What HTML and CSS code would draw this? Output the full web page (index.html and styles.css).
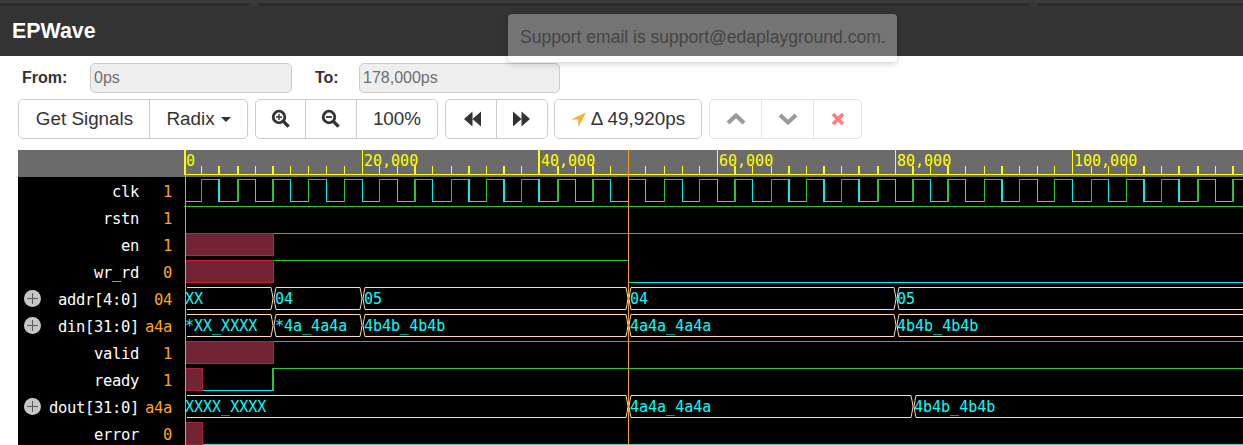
FILE: index.html
```html
<!DOCTYPE html>
<html lang="en">
<head>
    <meta charset="UTF-8">
    <meta name="viewport" content="width=device-width, initial-scale=1.0">
    <title>EPWave</title>
    <link rel="stylesheet" href="styles.css">
</head>
<body>
    <div class="top-strip">
        <span class="strip-part strip-a"></span>
        <span class="strip-seam"></span>
        <span class="strip-part strip-b"></span>
        <span class="strip-seam"></span>
        <span class="strip-part strip-c"></span>
    </div>
    <header class="navbar">EPWave</header>
    <div class="toast">Support email is support@edaplayground.com.</div>

    <form class="range-row">
        <label class="from-label" for="fromTime">From:</label>
        <input class="range-input" type="text" id="fromTime" value="0ps" disabled>
        <label class="to-label" for="toTime">To:</label>
        <input class="range-input to-input" type="text" id="toTime" value="178,000ps" disabled>
    </form>

    <div class="toolbar">
        <div class="btn-group">
            <button class="btn btn-signals">Get Signals</button>
            <button class="btn btn-radix">Radix <span class="caret"></span></button>
        </div>
        <div class="btn-group">
            <button class="btn btn-zoom-in" aria-label="Zoom in">
                <svg class="icon" width="20" height="20" viewBox="0 0 20 20">
                    <circle cx="8" cy="8" r="5.8" fill="none" stroke="#333" stroke-width="2.8"/>
                    <path d="M12.4 12.4 L17.6 17.6" stroke="#333" stroke-width="3.4" fill="none"/>
                    <path d="M8 5 V11 M5 8 H11" stroke="#333" stroke-width="1.4" fill="none"/>
                </svg>
            </button>
            <button class="btn btn-zoom-out" aria-label="Zoom out">
                <svg class="icon" width="20" height="20" viewBox="0 0 20 20">
                    <circle cx="8" cy="8" r="5.8" fill="none" stroke="#333" stroke-width="2.8"/>
                    <path d="M12.4 12.4 L17.6 17.6" stroke="#333" stroke-width="3.4" fill="none"/>
                    <path d="M5 8 H11" stroke="#333" stroke-width="1.8" fill="none"/>
                </svg>
            </button>
            <button class="btn btn-percent">100%</button>
        </div>
        <div class="btn-group">
            <button class="btn btn-back" aria-label="Previous edge">
                <svg class="icon" width="18" height="16" viewBox="0 0 18 16">
                    <path d="M0 8 L8.5 0.5 V15.5 Z M8.5 8 L17 0.5 V15.5 Z" fill="#333"/>
                </svg>
            </button>
            <button class="btn btn-forward" aria-label="Next edge">
                <svg class="icon" width="18" height="16" viewBox="0 0 18 16">
                    <path d="M0 0.5 L8.5 8 L0 15.5 Z M8.5 0.5 L17 8 L8.5 15.5 Z" fill="#333"/>
                </svg>
            </button>
        </div>
        <div class="btn-group btn-group-delta">
            <button class="btn btn-delta">
                <svg class="icon" width="15" height="15" viewBox="0 0 15 15">
                    <path d="M15 0.4 L7.6 15 L7.2 7.6 L0 7.6 Z" fill="#fdae33"/>
                </svg>
                Δ 49,920ps
            </button>
        </div>
        <div class="btn-group btn-group-off">
            <button class="btn btn-up" aria-label="Move up">
                <svg class="icon" width="20" height="12" viewBox="0 0 20 12">
                    <path d="M2 10 L10 2.5 L18 10" fill="none" stroke="#9a9a9a" stroke-width="4"/>
                </svg>
            </button>
            <button class="btn btn-down" aria-label="Move down">
                <svg class="icon" width="20" height="12" viewBox="0 0 20 12">
                    <path d="M2 2 L10 9.5 L18 2" fill="none" stroke="#9a9a9a" stroke-width="4"/>
                </svg>
            </button>
            <button class="btn btn-remove" aria-label="Remove">
                <svg class="icon" width="14" height="14" viewBox="0 0 14 14">
                    <path d="M2 2 L12 12 M12 2 L2 12" fill="none" stroke="#ff8080" stroke-width="3.8"/>
                </svg>
            </button>
        </div>
    </div>

    <div class="viewer">
        <div class="signals">
            <div class="signals-head"></div>
            <div class="signal"><span class="sig-name">clk</span><span class="sig-value">1</span></div>
            <div class="signal"><span class="sig-name">rstn</span><span class="sig-value">1</span></div>
            <div class="signal"><span class="sig-name">en</span><span class="sig-value">1</span></div>
            <div class="signal"><span class="sig-name">wr_rd</span><span class="sig-value">0</span></div>
            <div class="signal"><span class="expand"></span><span class="sig-name">addr[4:0]</span><span class="sig-value">04</span></div>
            <div class="signal"><span class="expand"></span><span class="sig-name">din[31:0]</span><span class="sig-value">a4a</span></div>
            <div class="signal"><span class="sig-name">valid</span><span class="sig-value">1</span></div>
            <div class="signal"><span class="sig-name">ready</span><span class="sig-value">1</span></div>
            <div class="signal"><span class="expand"></span><span class="sig-name">dout[31:0]</span><span class="sig-value">a4a</span></div>
            <div class="signal"><span class="sig-name">error</span><span class="sig-value">0</span></div>
        </div>

        <svg class="wave" width="1059" height="295" viewBox="184 150 1059 295">
            <g id="shapes"></g>
            <g class="axis-text">
                <text x="186" y="166">0</text>
                <text x="364" y="166">20,000</text>
                <text x="541" y="166">40,000</text>
                <text x="719" y="166">60,000</text>
                <text x="897" y="166">80,000</text>
                <text x="1074" y="166">100,000</text>
            </g>
            <g class="bus-text">
                <text x="185" y="304">XX</text>
                <text x="275" y="304">04</text>
                <text x="364" y="304">05</text>
                <text x="630" y="304">04</text>
                <text x="897" y="304">05</text>
                <text x="185" y="331">*XX_XXXX</text>
                <text x="275" y="331">*4a_4a4a</text>
                <text x="364" y="331">4b4b_4b4b</text>
                <text x="630" y="331">4a4a_4a4a</text>
                <text x="897" y="331">4b4b_4b4b</text>
                <text x="185" y="412">XXXX_XXXX</text>
                <text x="630" y="412">4a4a_4a4a</text>
                <text x="914" y="412">4b4b_4b4b</text>
            </g>
        </svg>
    </div>

    <script src="wave.js"></script>
</body>
</html>
```

FILE: styles.css
```css
html, body {
    height: 445px;
    overflow: hidden;
}

body {
    font-family: "Liberation Sans", Arial, sans-serif;
    margin: 0;
    padding: 0;
    background-color: #fff;
    color: #333;
}

.top-strip {
    display: flex;
    height: 7px;
    background-color: #333;
}

.strip-part {
    height: 7px;
    background: linear-gradient(#3a3a3a 0, #3a3a3a 2px, #3f3f3f 2px, #3f3f3f 3px, #2b2b2b 3px, #2b2b2b 6px, #333 6px);
}

.strip-a {
    width: 249px;
}

.strip-b {
    width: 771px;
}

.strip-c {
    flex: 1;
}

.strip-seam {
    width: 9px;
    background: linear-gradient(#3a3a3a 0, #3a3a3a 3px, #363636 3px, #363636 7px);
}

.navbar {
    height: 49px;
    padding-left: 12px;
    background-color: #333;
    color: #fff;
    font-size: 21.4px;
    font-weight: bold;
    line-height: 49px;
}

.toast {
    position: absolute;
    left: 508px;
    top: 14px;
    width: 389px;
    height: 48px;
    box-sizing: border-box;
    padding-left: 12px;
    background-color: rgba(255, 255, 255, 0.32);
    border-radius: 4px;
    box-shadow: 0 2px 6px rgba(0, 0, 0, 0.18);
    color: #454545;
    font-size: 17.55px;
    line-height: 47px;
    white-space: nowrap;
}

.range-row {
    display: flex;
    align-items: center;
    height: 30px;
    margin-top: 7px;
    padding-left: 22px;
    font-size: 16px;
}

.range-row label {
    font-weight: bold;
}

.from-label {
    width: 68px;
}

.to-label {
    width: 44px;
    margin-left: 23px;
}

.range-input {
    width: 202px;
    height: 30px;
    box-sizing: border-box;
    padding: 0 3px;
    border: 1px solid #ccc;
    border-radius: 5px;
    background-color: #eee;
    color: #6f6f6f;
    font-family: inherit;
    font-size: 16px;
}

.to-input {
    width: 201px;
}

.toolbar {
    display: flex;
    gap: 7px;
    margin-top: 6px;
    padding-left: 18px;
}

.btn-group {
    display: flex;
    height: 40px;
    box-sizing: border-box;
    border: 1px solid #ccc;
    border-radius: 5px;
    background-color: #fff;
}

.btn-group-delta {
    margin-left: -1px;
}

.btn-group-off {
    border-color: #e4e4e4;
}

.btn {
    display: flex;
    align-items: center;
    justify-content: center;
    padding: 0;
    border: none;
    border-left: 1px solid #ccc;
    background: none;
    color: #333;
    font-family: inherit;
    font-size: 18.85px;
    cursor: pointer;
}

.btn:first-child {
    border-left: none;
}

.btn-group-off .btn {
    border-left-color: #e4e4e4;
}

.btn-group-off .btn:first-child {
    border-left: none;
}

.btn-signals { width: 130px; padding-left: 1px; }
.btn-radix { width: 98px; }
.btn-zoom-in { width: 49px; }
.btn-zoom-out { width: 51px; }
.btn-percent { width: 81px; }
.btn-back { width: 50px; padding-left: 3px; }
.btn-forward { width: 51px; }
.btn-delta { width: 146px; gap: 5px; }
.btn-up { width: 51px; }
.btn-down { width: 52px; }
.btn-remove { width: 48px; }

.caret {
    display: inline-block;
    width: 0;
    height: 0;
    margin-left: 6px;
    border-top: 5px solid #333;
    border-left: 5.5px solid transparent;
    border-right: 5.5px solid transparent;
}

.viewer {
    display: flex;
    margin-top: 11px;
    margin-left: 18px;
    background-color: #000;
}

.signals {
    width: 166px;
    flex: none;
    color: #fff;
    font-family: "DejaVu Sans Mono", monospace;
    font-size: 15.5px;
    letter-spacing: -0.33px;
}

.signals-head {
    height: 27px;
    background-color: #6b6b6b;
}

.signal {
    display: flex;
    align-items: center;
    height: 27px;
    line-height: 27px;
}

.sig-name {
    width: 121px;
    margin-left: auto;
    padding-top: 4px;
    text-align: right;
    white-space: nowrap;
}

.sig-value {
    width: 33px;
    margin-right: 12px;
    padding-top: 4px;
    color: #ffa31a;
    text-align: right;
}

.expand {
    position: relative;
    width: 17px;
    height: 17px;
    margin-left: 6px;
    margin-right: -23px;
    flex: none;
    border-radius: 50%;
    background: radial-gradient(#c2c2c2, #c8c8c8 60%, #dcdcdc);
}

.expand::before,
.expand::after {
    content: "";
    position: absolute;
    background-color: #5c5c5c;
}

.expand::before {
    left: 3px;
    right: 3px;
    top: 8px;
    height: 1px;
}

.expand::after {
    top: 3px;
    bottom: 3px;
    left: 8px;
    width: 1px;
}

.wave {
    display: block;
    flex: none;
}

.wave text {
    font-family: "DejaVu Sans Mono", monospace;
    font-size: 15px;
}

.axis-text {
    fill: #ffff00;
}

.bus-text {
    fill: #00ffff;
}
```

FILE: wave.js
```js
// draws the timeline, clock and bus shapes into the svg
const shapes = document.getElementById('shapes');
const NS = 'http://www.w3.org/2000/svg';

const GREEN = '#2ec42e';
const CYAN = '#00f0f0';
const YELLOW = '#ffff00';
const PEACH = '#ffdab9';

function rect(x, y, w, h, fill) {
    const r = document.createElementNS(NS, 'rect');
    r.setAttribute('x', x);
    r.setAttribute('y', y);
    r.setAttribute('width', w);
    r.setAttribute('height', h);
    r.setAttribute('fill', fill);
    r.setAttribute('shape-rendering', 'crispEdges');
    shapes.appendChild(r);
}

function line(d) {
    const p = document.createElementNS(NS, 'path');
    p.setAttribute('d', d);
    p.setAttribute('fill', 'none');
    p.setAttribute('stroke', PEACH);
    shapes.appendChild(p);
}

// pixel x of each clock edge, [x, 2] where the edge lands on two pixels
const edges = [
    [201], [218, 2], [237, 2], [255], [272, 2], [290], [308], [326], [344], [362],
    [379], [397], [414, 2], [432], [451], [468, 2], [486], [503, 2], [521], [538, 2],
    [557, 2], [575], [592, 2], [610], [628], [645], [664], [682], [699], [717],
    [734, 2], [752], [771], [788, 2], [806], [823, 2], [841], [858, 2], [877, 2], [895],
    [912, 2], [930], [947, 2], [965], [984], [1001, 2], [1019], [1037], [1054], [1072],
    [1091], [1108], [1126], [1143, 2], [1161], [1178, 2], [1197, 2], [1215], [1232, 2]
];
const majors = [362, 538, 717, 895, 1072];

// header
rect(184, 150, 1059, 27, '#6b6b6b');
rect(184, 174, 1059, 1, YELLOW);
rect(184, 150, 2, 25, YELLOW);
edges.forEach(([x, w = 1]) => {
    const top = majors.includes(x) ? 150 : 166;
    rect(x, top, w, 174 - top, YELLOW);
});

// clk
rect(185, 201, 16, 1, CYAN);
edges.forEach(([x, w = 1], i) => {
    const rising = i % 2 === 0;
    const next = edges[i + 1] ? edges[i + 1][0] : 1243;
    rect(x, 179, w, 23, rising ? GREEN : CYAN);
    rect(x, rising ? 179 : 201, next - x, 1, rising ? GREEN : CYAN);
});

// single bit levels: [x, y, width]
rect(184, 206, 1059, 1, GREEN);
rect(273, 233, 970, 1, GREEN);
rect(273, 260, 355, 1, GREEN);
rect(628, 282, 615, 1, CYAN);
rect(273, 341, 970, 1, GREEN);
rect(272, 368, 2, 23, GREEN);
rect(273, 368, 970, 1, GREEN);
rect(203, 390, 70, 1, CYAN);
rect(202, 444, 1041, 1, CYAN);

// undefined stretches
function unknown(y, right, border) {
    rect(185, y, right - 185, 23, border);
    rect(186, y + 1, right - 187, 21, '#722334');
}
unknown(233, 274, '#dc143c');
unknown(260, 274, '#dc143c');
unknown(341, 274, '#dc143c');
unknown(368, 203, '#a62040');
unknown(422, 203, '#a62040');

// buses: top y and the x of each value change
function bus(top, changes) {
    const t = top + 0.5;
    const b = top + 22.5;
    const mid = top + 11.5;
    let from = 184;
    changes.concat(1250).forEach((x) => {
        line(`M${from + 3} ${t} H${x - 2} L${x - 1} ${t + 5} L${x} ${mid} L${x - 1} ${b - 5} L${x - 2} ${b} H${from + 3}`);
        if (from > 184) {
            line(`M${from + 3} ${t} L${from + 2} ${t + 5} L${from + 1} ${mid} L${from + 2} ${b - 5} L${from + 3} ${b}`);
        }
        from = x;
    });
}
bus(287, [273, 362, 628, 896]);
bus(314, [273, 362, 628, 896]);
bus(395, [628, 913]);

// time zero and the cursor
rect(185, 175, 1, 270, '#aaaaaa');
rect(628, 150, 1, 295, '#eda21f');
```
